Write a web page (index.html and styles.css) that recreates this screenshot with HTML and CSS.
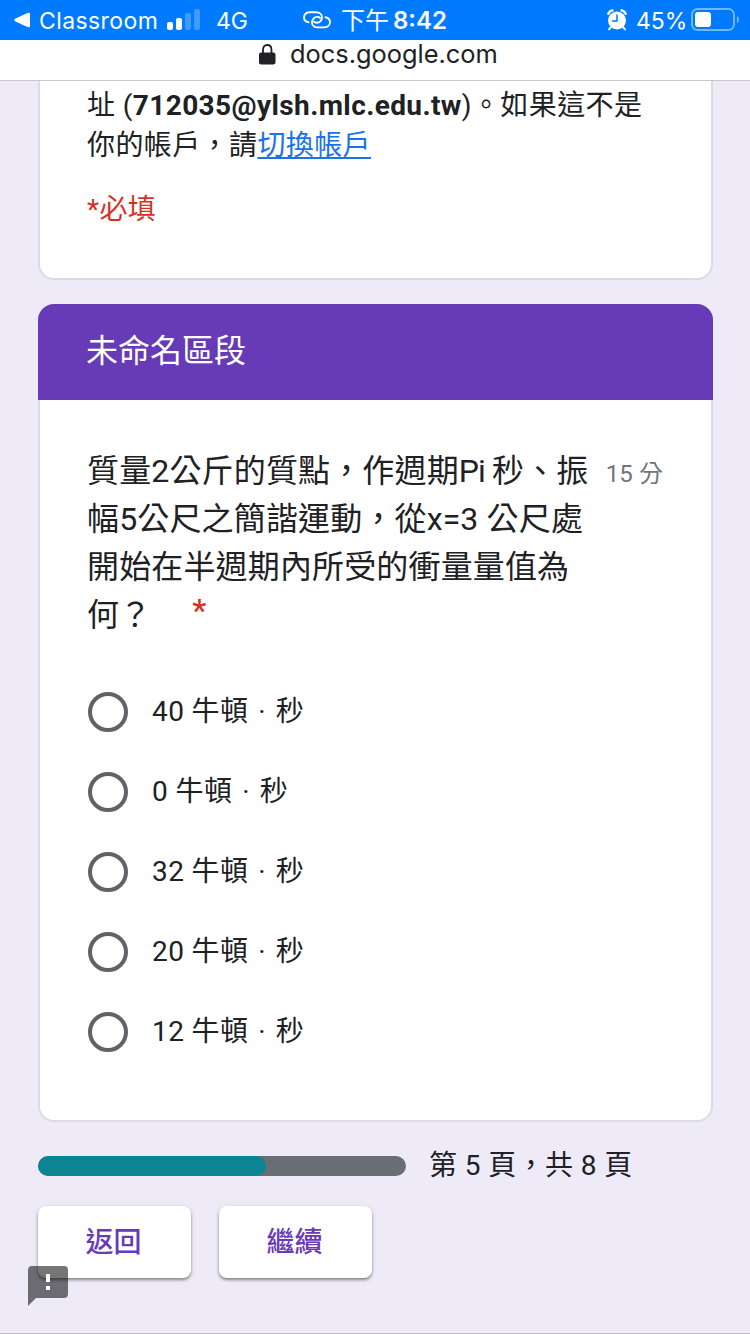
FILE: index.html
```html
<!DOCTYPE html>
<html lang="zh-Hant">
<head>
    <meta charset="UTF-8">
    <meta name="viewport" content="width=device-width, initial-scale=1.0">
    <title>docs.google.com</title>
    <link rel="stylesheet" href="styles.css">
</head>
<body>
    <div class="status-bar">
        <div class="status-left">
            <svg class="back-icon" width="17" height="16" viewBox="0 0 17 16"><path d="M1 6.800 14 .8q2-.6 2 1.200v12q0 1.800-2 1.200L1 9.200q-1.500-1.200 0-2.400z" fill="#fff"/></svg>
            <span class="back-label">Classroom</span>
            <svg class="signal-icon" width="34" height="22" viewBox="0 0 34 22" fill="#fff">
                <rect x="0" y="13" width="6" height="8" rx="2"/>
                <rect x="9" y="9" width="6" height="12" rx="2"/>
                <rect x="18" y="4" width="6" height="17" rx="2" opacity=".25"/>
                <rect x="27" y="0" width="6" height="21" rx="2" opacity=".25"/>
            </svg>
            <span class="network">4G</span>
        </div>
        <div class="status-center">
            <svg width="28" height="18" viewBox="0 0 28 18" fill="none" stroke="#fff" stroke-width="1.900" stroke-linecap="round">
                <path d="M5.500 11.300C2.800 10.800 1 9 1 6.500 1 3.400 3.300 1.300 6.500 1.300h6.800c3.200 0 5.700 2 5.700 5 0 2.900-2.200 5.400-5.200 5.400-1.200 0-2.200-.3-2.800-1"/>
                <path d="M22.500 6.200c2.700.5 4.500 2.300 4.500 4.900 0 3.100-2.300 5.300-5.500 5.300h-6.800C11.500 16.400 9 14.300 9 11.400c0-2.900 2.200-5.500 5.200-5.500 1.200 0 2.200.3 2.800 1"/>
            </svg>
            <span class="clock">下午<b>8:42</b></span>
        </div>
        <div class="status-right">
            <svg width="20" height="22" viewBox="0 0 20 22">
                <circle cx="10" cy="11.500" r="9" fill="#fff"/>
                <path d="M1.300 4.800Q2.200 2 5.500 1.400M18.700 4.800Q17.800 2 14.500 1.400" fill="none" stroke="#fff" stroke-width="2.400" stroke-linecap="round"/>
                <path d="M4 18l-2 2.300M16 18l2 2.300" stroke="#fff" stroke-width="2" stroke-linecap="round"/>
                <path d="M10 5.500V12H5" fill="none" stroke="#007aff" stroke-width="1.500"/>
            </svg>
            <span class="percent">45%</span>
            <svg width="49" height="24" viewBox="0 0 49 24">
                <rect x="1" y="1" width="42" height="21" rx="5.500" fill="none" stroke="#fff" stroke-width="2" opacity=".45"/>
                <rect x="4" y="4" width="16" height="15" rx="3" fill="#fff"/>
                <path d="M46 8q2 1 2 3.500T46 15z" fill="#fff" opacity=".5"/>
            </svg>
        </div>
    </div>

    <div class="address-bar">
        <svg width="17" height="21" viewBox="0 0 17 21">
            <rect x="0" y="8.500" width="16.500" height="12" rx="2.200" fill="#202124"/>
            <path d="M4 10V6C4 3 5.600 1 8.250 1S12.500 3 12.500 6v4" fill="none" stroke="#202124" stroke-width="1.800"/>
        </svg>
        <span>docs.google.com</span>
    </div>

    <main class="form">
        <section class="card intro">
            <p>址 (<b>712035@ylsh.mlc.edu.tw</b>)。如果這不是<br>你的帳戶，請<a href="#">切換帳戶</a></p>
            <p class="required-note">*必填</p>
        </section>

        <section class="card section">
            <h2>未命名區段</h2>
            <div class="question">
                <div class="question-head">
                    <div class="question-title">質量2公斤的質點，作週期<span class="latin">Pi </span>秒、振<br>幅5公尺之簡諧運動，從x=3 公尺處<br>開始在半週期內所受的衝量量值為<br>何？<span class="star">*</span></div>
                    <div class="points">15 分</div>
                </div>
                <div class="options">
                    <label class="option"><input type="radio" name="answer"><span>40 牛頓 <i>·</i> 秒</span></label>
                    <label class="option"><input type="radio" name="answer"><span>0 牛頓 <i>·</i> 秒</span></label>
                    <label class="option"><input type="radio" name="answer"><span>32 牛頓 <i>·</i> 秒</span></label>
                    <label class="option"><input type="radio" name="answer"><span>20 牛頓 <i>·</i> 秒</span></label>
                    <label class="option"><input type="radio" name="answer"><span>12 牛頓 <i>·</i> 秒</span></label>
                </div>
            </div>
        </section>

        <div class="progress">
            <div class="progress-track"><div class="progress-fill" style="width: 62%"></div></div>
            <span>第 5 頁，共 8 頁</span>
        </div>

        <div class="buttons">
            <button type="button">返回</button>
            <button type="button">繼續</button>
        </div>
    </main>

    <svg class="report" width="40" height="40" viewBox="0 0 40 40">
        <path d="M4 0h32q4 0 4 4v24q0 4-4 4H8l-8 8V4q0-4 4-4zM18 8v8h4V8zM18 20v4h4v-4z" fill="#000" fill-opacity=".54" fill-rule="evenodd"/>
        <path d="M18 8h4v8h-4zM18 20h4v4h-4z" fill="#fff"/>
    </svg>
</body>
</html>
```
FILE: styles.css
```css
* {
    box-sizing: border-box;
}
body {
    margin: 0;
    height: 1334px;
    overflow: hidden;
    position: relative;
    background-color: #eeeaf8;
    border-bottom: 1px solid #bdb9c7;
    font-family: Roboto, "Noto Sans CJK TC", sans-serif;
    font-size: 28px;
    color: #202124;
}
svg {
    display: block;
    flex: none;
}
.status-bar {
    display: grid;
    grid-template-columns: 303px 303px 144px;
    height: 40px;
    background-color: #007aff;
    color: #fff;
    font-family: Inter, "Noto Sans CJK TC", sans-serif;
    font-size: 23px;
    line-height: 38px;
    white-space: nowrap;
}
.status-bar span {
    padding-top: 2px;
}
.status-left,
.status-center,
.status-right {
    display: flex;
    align-items: center;
}
.status-left {
    padding-left: 14px;
}
.back-label {
    width: 119px;
    margin-left: 8px;
    letter-spacing: 0.4px;
}
.signal-icon {
    margin-left: 9px;
    margin-top: -1px;
}
.network {
    margin-left: 15px;
}
.clock {
    margin-left: 10px;
    font-size: 24px;
}
.clock b {
    margin-left: 4px;
    font-weight: 600;
    font-size: 24px;
}
.status-right {
    padding-left: 1px;
}
.percent {
    width: 64px;
    padding-left: 9px;
}
.address-bar {
    display: flex;
    height: 41px;
    padding: 4px 0 0 259px;
    background-color: #fff;
    border-bottom: 1px solid #c8c8ca;
    font-family: Inter, sans-serif;
    font-size: 25.4px;
    line-height: 20px;
}
.address-bar span {
    margin-left: 14px;
}
.form {
    width: 675px;
    margin-left: 38px;
}
.card {
    background-color: #fff;
    border: 2px solid #dadce0;
    border-radius: 16px;
}
.intro {
    height: 199px;
    padding: 5px 47px 0;
    border-top: 0;
    border-radius: 0 0 16px 16px;
    line-height: 40px;
    letter-spacing: 0.4px;
    white-space: nowrap;
}
.intro p {
    margin: 0;
}
.intro a {
    color: #1a73e8;
    text-decoration: underline;
}
.intro .required-note {
    margin-top: 24px;
    color: #d93025;
}
.section {
    height: 818px;
    margin-top: 24px;
    border-top: 0;
}
.section h2 {
    height: 96px;
    margin: 0 -2px;
    padding-left: 48px;
    border-radius: 16px 16px 0 0;
    background-color: #673ab7;
    color: #fff;
    font-size: 32px;
    font-weight: 400;
    line-height: 95px;
}
.question {
    padding: 47px 48px 0 47px;
}
.question-head {
    display: flex;
    justify-content: space-between;
    white-space: nowrap;
}
.question-title {
    font-size: 32px;
    line-height: 48px;
    letter-spacing: 0.15px;
}
.latin {
    letter-spacing: -0.9px;
}
.star {
    display: inline-block;
    margin-left: 41px;
    color: #d93025;
    font-weight: 500;
    line-height: 38px;
    vertical-align: top;
}
.points {
    font-size: 24px;
    line-height: 54px;
    letter-spacing: 0.1px;
    color: #70757a;
}
.options {
    margin-top: 33px;
}
.option {
    display: flex;
    align-items: center;
    height: 80px;
    line-height: 40px;
    letter-spacing: 0.4px;
}
.option input {
    appearance: none;
    width: 40px;
    height: 40px;
    margin: 0 24px 0 1px;
    border: 4px solid #5f6368;
    border-radius: 50%;
}
.option i {
    padding: 0 2.5px;
    font-style: normal;
}
.progress {
    display: flex;
    align-items: center;
    height: 40px;
    margin-top: 24px;
    letter-spacing: 0.4px;
}
.progress span {
    padding-bottom: 6px;
}
.progress-track {
    width: 368px;
    height: 20px;
    margin-right: 23px;
    overflow: hidden;
    border-radius: 10px;
    background-color: #696e75;
}
.progress-fill {
    height: 20px;
    border-radius: 10px;
    background-color: #0a8591;
}
.buttons {
    display: flex;
    gap: 28px;
    margin-top: 20px;
}
.buttons button {
    width: 153px;
    height: 72px;
    padding: 0 2px 5px 0;
    border: 0;
    border-radius: 8px;
    background-color: #fff;
    box-shadow: 0 2px 3px rgba(0, 0, 0, 0.4), 0 1px 6px rgba(0, 0, 0, 0.08);
    color: #673ab7;
    font-family: inherit;
    font-size: 28px;
    font-weight: 500;
}
/* feedback icon floats over the page corner */
.report {
    position: absolute;
    left: 28px;
    top: 1266px;
}
```
